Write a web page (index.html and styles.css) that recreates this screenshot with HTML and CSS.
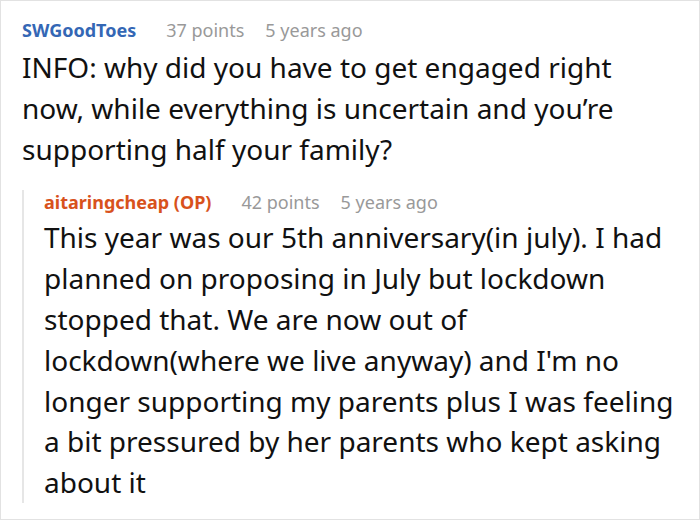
FILE: index.html
```html
<!DOCTYPE html>
<html>
<head>
<meta charset="utf-8">
<link rel="stylesheet" href="styles.css">
</head>
<body>
<div class="card">
  <div class="meta">
    <span class="author">SWGoodToes</span>
    <span class="info">37 points</span>
    <span class="info">5 years ago</span>
  </div>
  <p class="text">INFO: why did you have to get engaged right now, while everything is uncertain and you’re supporting half your family?</p>
  <div class="reply">
    <div class="meta reply-meta">
      <span class="author op">aitaringcheap (OP)</span>
      <span class="info">42 points</span>
      <span class="info">5 years ago</span>
    </div>
    <p class="text reply-text">This year was our 5th anniversary(in july). I had planned on proposing in July but lockdown stopped that. We are now out of lockdown(where we live anyway) and I'm no longer supporting my parents plus I was feeling a bit pressured by her parents who kept asking about it</p>
  </div>
</div>
</body>
</html>
```

FILE: styles.css
```css
html, body {
  margin: 0;
  padding: 0;
  background: #ffffff;
}

.card {
  box-sizing: border-box;
  width: 700px;
  height: 520px;
  border: 1px solid #e2e2e2;
  padding: 17px 25px 0 21px;
  font-family: "Noto Sans", "DejaVu Sans", sans-serif;
  color: #111111;
  overflow: hidden;
}

.meta {
  display: flex;
  align-items: baseline;
  gap: 21px;
  font-size: 18px;
  line-height: 24px;
  white-space: nowrap;
}

.author {
  font-weight: 700;
  color: #3467b5;
  margin-right: 9px;
}

.author.op {
  color: #d8521c;
}

.info {
  color: #999999;
}

.text {
  margin: 5px 0 0;
  font-size: 28px;
  line-height: 40.8px;
}

.reply {
  margin-top: 31px;
  border-left: 2px solid #e6e6e6;
  padding-left: 20px;
}

.reply-meta {
  margin-top: -10px;
}

.reply-text {
  margin-top: 3px;
  margin-bottom: 0;
}
```
